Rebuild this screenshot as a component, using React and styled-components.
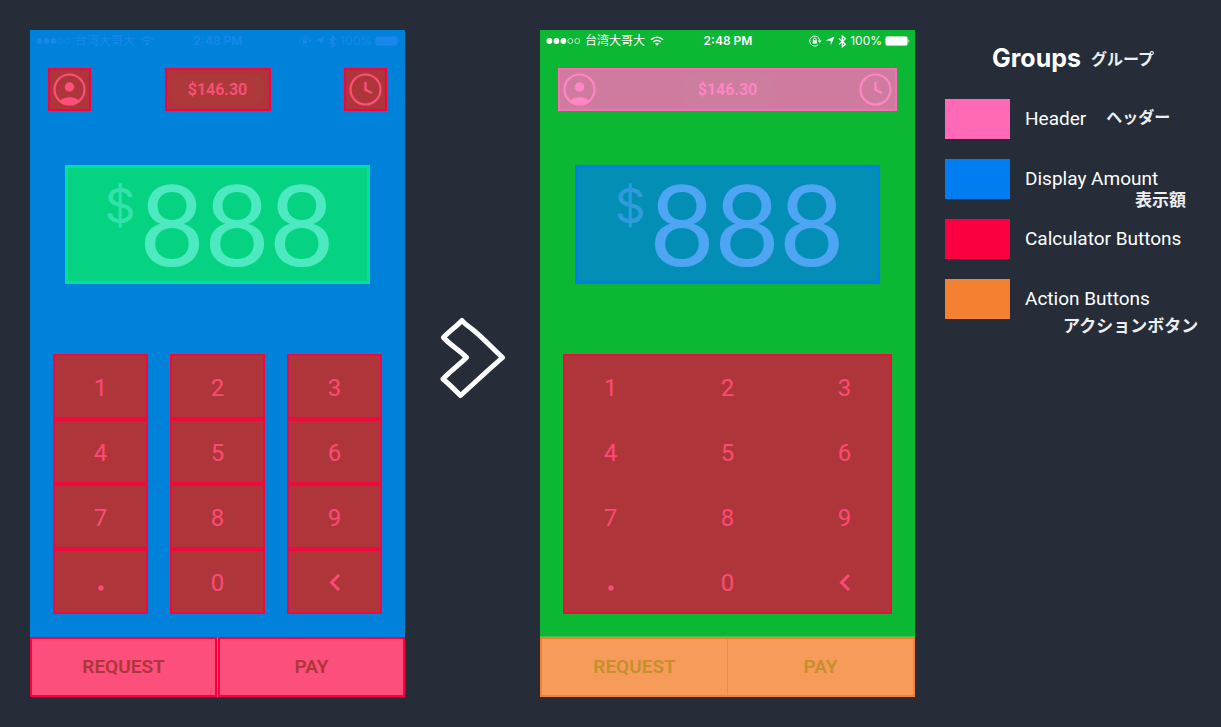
import React from "react";
import styled, { createGlobalStyle, css } from "styled-components";

const GlobalStyle = createGlobalStyle`
  *, *::before, *::after { box-sizing: border-box; }
  body {
    margin: 0;
    background: #262d39;
    color: #fff;
    font-family: Roboto, "Liberation Sans", sans-serif;
  }
  button { font: inherit; color: inherit; background: none; border: 0; padding: 0; margin: 0; cursor: pointer; }
`;

const blueTheme = {
  split: true,
  screen: "#0082db",
  status: "#1987ec",
  headerFill: "#ae363a",
  headerLine: "#fa0041",
  headerInk: "#fc4f7b",
  pill: "#ae393a",
  amountFill: "#05d381",
  amountLine: "#02e0a1",
  amountInk: "#4deac1",
  currencyInk: "#34e1ab",
  actionFill: "#fc4f7b",
  actionLine: "#fa0041",
  actionInk: "#ae363a",
  divider: "#3fb0c0",
};

const greenTheme = {
  split: false,
  screen: "#0bb733",
  status: "#ffffff",
  headerFill: "#cf7b9f",
  headerLine: "#ff69b5",
  headerInk: "#ff85c5",
  pill: "#cd7e9e",
  amountFill: "#038eb6",
  amountLine: "#007df0",
  amountInk: "#4da5f3",
  currencyInk: "#2f9bdc",
  actionFill: "#f79b5b",
  actionLine: "#f48132",
  actionInk: "#c3902c",
  divider: "#e09349",
};

const Page = styled.main`
  display: grid;
  grid-template-columns: minmax(0, 375fr) 135px minmax(0, 375fr) minmax(0, 291fr);
  align-items: start;
  padding: 30px 15px 30px 30px;
`;

const Screen = styled.section`
  display: flex;
  flex-direction: column;
  background: ${(p) => p.$t.screen};
`;

const StatusBar = styled.div`
  display: grid;
  grid-template-columns: 1fr auto 1fr;
  align-items: center;
  height: 20px;
  padding: 2px 5px 0 6px;
  color: ${(p) => p.$t.status};
  font-family: Inter, "Noto Sans CJK TC", sans-serif;
  font-size: 12px;
  line-height: 18px;
`;

const StatusGroup = styled.div`
  display: flex;
  align-items: center;
  justify-content: ${(p) => (p.$end ? "flex-end" : "flex-start")};
  gap: ${(p) => (p.$end ? "3px" : "5px")};
  white-space: nowrap;
`;

const Clock = styled.span`
  font-weight: 600;
`;

const Header = styled.header`
  display: flex;
  justify-content: space-between;
  height: 43px;
  margin: 18px 18px 0;
  color: ${(p) => p.$t.headerInk};
  ${(p) =>
    !p.$t.split &&
    css`
      background: ${p.$t.headerFill};
      box-shadow: inset 0 0 0 2px ${p.$t.headerLine};
    `}
`;

const HeaderButton = styled.button`
  display: flex;
  align-items: center;
  justify-content: center;
  width: ${(p) => (p.$wide ? "106px" : "43px")};
  ${(p) =>
    p.$t.split &&
    css`
      background: ${p.$t.headerFill};
      box-shadow: inset 0 0 0 2px ${p.$t.headerLine};
    `}
`;

const Balance = styled.span`
  width: 94px;
  border-radius: 16px;
  background: ${(p) => p.$t.pill};
  font: 600 16px/32px Roboto, sans-serif;
  text-align: center;
`;

const Amount = styled.div`
  display: flex;
  justify-content: center;
  gap: 4px;
  height: 119px;
  margin: 54px 35px 0;
  padding-left: 4px;
  border: 3px solid ${(p) => p.$t.amountLine};
  background: ${(p) => p.$t.amountFill};
  color: ${(p) => p.$t.amountInk};
`;

const Currency = styled.span`
  padding-top: 8px;
  color: ${(p) => p.$t.currencyInk};
  font: 400 48px/60px Inter, sans-serif;
`;

const Figure = styled.span`
  font: 400 112px/110px Lato, sans-serif;
`;

const Keypad = styled.div`
  display: grid;
  grid-template-columns: repeat(3, minmax(0, 1fr));
  grid-auto-rows: 65px;
  column-gap: 22px;
  margin: 70px 23px 0;
  color: #fc4a77;
  font: 400 24px/28px Roboto, sans-serif;
  ${(p) =>
    !p.$t.split &&
    css`
      background: #ae363a;
      box-shadow: inset 0 0 0 2px #e80f3f;
    `}
`;

const Key = styled.button`
  display: flex;
  align-items: center;
  justify-content: center;
  padding-top: 3px;
  ${(p) =>
    p.$t.split &&
    css`
      background: #ae363a;
      border: 2px solid #f0083f;
    `}
`;

const Actions = styled.div`
  display: grid;
  grid-template-columns: 1fr 1fr;
  column-gap: 1px;
  height: 60px;
  margin-top: 23px;
  background: ${(p) => p.$t.divider};
  color: ${(p) => p.$t.actionInk};
  font: 600 19px/24px Roboto, sans-serif;
  ${(p) =>
    !p.$t.split &&
    css`
      border: 2px solid ${p.$t.actionLine};
      box-shadow: 0 -1px #45bd4e;
    `}
`;

const ActionButton = styled.button`
  background: ${(p) => p.$t.actionFill};
  ${(p) => p.$t.split && css`border: 2px solid ${p.$t.actionLine};`}
`;

const ArrowCell = styled.div`
  display: flex;
  align-self: center;
  justify-content: center;
  margin-bottom: 12px;
`;

const Legend = styled.aside`
  padding: 12px 0 0 30px;
`;

const LegendTitle = styled.h1`
  display: flex;
  align-items: center;
  gap: 10px;
  height: 32px;
  margin: 0 0 25px 47px;
  font: 700 25px/32px Inter, sans-serif;
  white-space: nowrap;
`;

const LegendList = styled.ul`
  display: grid;
  grid-auto-rows: 40px;
  row-gap: 20px;
  margin: 0;
  padding: 0;
  list-style: none;
`;

const LegendItem = styled.li`
  display: flex;
  gap: 15px;
`;

const Swatch = styled.span`
  flex: none;
  width: 65px;
  height: 40px;
  background: ${(p) => p.$color};
`;

const LegendText = styled.div`
  display: flex;
  flex-direction: ${(p) => (p.$inline ? "row" : "column")};
  gap: ${(p) => (p.$inline ? "20px" : "0")};
  padding-top: 8px;
  font-size: 19px;
  line-height: 24px;
  white-space: nowrap;
`;

const Note = styled.span`
  margin-left: ${(p) => p.$indent || 0}px;
  padding-top: ${(p) => p.$drop || 0}px;
  color: #eceef0;
  font: 700 ${(p) => p.$size || 17}px/16px "Noto Sans CJK JP", sans-serif;
`;

function SignalDots() {
  return (
    <svg width="34" height="8" viewBox="0 0 34 8" fill="currentColor" aria-hidden="true">
      <circle cx="3.4" cy="4" r="2.9" />
      <circle cx="10.4" cy="4" r="2.9" />
      <circle cx="17.4" cy="4" r="2.9" />
      <g fill="none" stroke="currentColor" strokeWidth="0.7">
        <circle cx="24.3" cy="4" r="2.5" />
        <circle cx="31.3" cy="4" r="2.5" />
      </g>
    </svg>
  );
}

function Wifi() {
  return (
    <svg width="14" height="10" viewBox="0 0 14 10" fill="none" stroke="currentColor" strokeWidth="1.6" aria-hidden="true">
      <path d="M1 3.8C4.4.4 9.6.4 13 3.8" />
      <path d="M3.2 6C5.4 3.9 8.6 3.9 10.8 6" />
      <path d="M4.9 7.5C6.1 6.5 7.9 6.5 9.1 7.5L7 9.7z" fill="currentColor" stroke="none" />
    </svg>
  );
}

function RotationLock() {
  return (
    <svg width="13" height="12" viewBox="0 0 13 12" fill="none" stroke="currentColor" aria-hidden="true">
      <path d="M9.2 9.7A5 5 0 1 1 10.7 5.5" strokeWidth="0.9" />
      <path d="M8.7 5.4h4L10.7 8z" fill="currentColor" stroke="none" />
      <rect x="3.7" y="5.3" width="4.2" height="3.3" fill="currentColor" stroke="none" />
      <path d="M4.5 5.5V4.4a1.3 1.3 0 0 1 2.6 0v1.1" strokeWidth="0.9" />
    </svg>
  );
}

function LocationArrow() {
  return (
    <svg width="10" height="10" viewBox="0 0 10 10" fill="currentColor" aria-hidden="true">
      <path d="M9.6.6 5.7 9.5V4.7L.6 4.6z" />
    </svg>
  );
}

function Bluetooth() {
  return (
    <svg width="9" height="13" viewBox="0 0 9 13" fill="none" stroke="currentColor" strokeWidth="1.3" aria-hidden="true">
      <path d="M1 3.6 7.5 9.3 4.4 11.8V1.2L7.5 3.7 1 9.4" />
    </svg>
  );
}

function Battery() {
  return (
    <svg width="25" height="10" viewBox="0 0 25 10" fill="currentColor" aria-hidden="true">
      <rect x="0.5" y="0.5" width="22" height="9" rx="1.8" fill="none" stroke="currentColor" strokeOpacity="0.6" />
      <rect x="1" y="1" width="21" height="8" rx="0.8" />
      <path d="M23.5 3.3c1.1.5 1.1 2.9 0 3.4z" />
    </svg>
  );
}

function Person() {
  return (
    <svg width="33" height="33" viewBox="0 0 33 33" fill="currentColor" aria-hidden="true">
      <circle cx="16.5" cy="16.5" r="15" fill="none" stroke="currentColor" strokeWidth="2.2" />
      <circle cx="16.5" cy="14" r="4.7" />
      <path d="M7.5 27.6C9.5 25.2 12.5 24.3 16.5 24.3S23.5 25.2 25.5 27.6C23 30.3 20 31.6 16.5 31.6S10 30.3 7.5 27.6z" />
    </svg>
  );
}

function ClockFace() {
  return (
    <svg width="33" height="33" viewBox="0 0 33 33" fill="none" stroke="currentColor" aria-hidden="true">
      <circle cx="16.5" cy="16.5" r="15" strokeWidth="2.2" />
      <path d="M16.5 9V16.8L23 20" strokeWidth="2.4" />
    </svg>
  );
}

function Backspace() {
  return (
    <svg width="12" height="18" viewBox="0 0 12 18" fill="none" stroke="currentColor" strokeWidth="3" aria-hidden="true">
      <path d="M10 1 2.5 8.5 10 16" />
    </svg>
  );
}

function Point() {
  return (
    <svg width="6" height="18" viewBox="0 0 6 18" fill="currentColor" aria-hidden="true">
      <circle cx="3" cy="14" r="2.7" />
    </svg>
  );
}

function Chevron() {
  return (
    <svg width="66" height="82" viewBox="0 0 66 82" fill="none" stroke="#fff" strokeWidth="5" strokeLinejoin="round" aria-hidden="true">
      <path d="M22 3.5C24.5 6.5 26.5 8.2 30 10.5C42 19.5 52 31 62.5 40.5L49 52.5L20.5 78.5C16 74 9 67 3 62C8 56 19 48 26.5 40.5C20 33.5 10 28 3.5 20.5C9 14.5 17 9 22 3.5z" />
    </svg>
  );
}

const keys = ["1", "2", "3", "4", "5", "6", "7", "8", "9", ".", "0", "<"];

function keyFace(k) {
  if (k === ".") return <Point />;
  if (k === "<") return <Backspace />;
  return k;
}

const keyNames = { ".": "Decimal point", "<": "Delete" };

function Phone({ t }) {
  return (
    <Screen $t={t}>
      <StatusBar $t={t}>
        <StatusGroup>
          <SignalDots />
          <span>台湾大哥大</span>
          <Wifi />
        </StatusGroup>
        <Clock>2:48 PM</Clock>
        <StatusGroup $end>
          <RotationLock />
          <LocationArrow />
          <Bluetooth />
          <span>100%</span>
          <Battery />
        </StatusGroup>
      </StatusBar>
      <Header $t={t}>
        <HeaderButton $t={t} aria-label="Profile"><Person /></HeaderButton>
        <HeaderButton $t={t} $wide><Balance $t={t}>$146.30</Balance></HeaderButton>
        <HeaderButton $t={t} aria-label="History"><ClockFace /></HeaderButton>
      </Header>
      <Amount $t={t}>
        <Currency $t={t}>$</Currency>
        <Figure>888</Figure>
      </Amount>
      <Keypad $t={t}>
        {keys.map((k) => (
          <Key key={k} $t={t} aria-label={keyNames[k]}>{keyFace(k)}</Key>
        ))}
      </Keypad>
      <Actions $t={t}>
        <ActionButton $t={t}>REQUEST</ActionButton>
        <ActionButton $t={t}>PAY</ActionButton>
      </Actions>
    </Screen>
  );
}

export default function App() {
  return (
    <>
      <GlobalStyle />
      <Page>
        <Phone t={blueTheme} />
        <ArrowCell><Chevron /></ArrowCell>
        <Phone t={greenTheme} />
        <Legend>
          <LegendTitle>
            Groups
            <Note lang="ja" $size={16}>グループ</Note>
          </LegendTitle>
          <LegendList>
            <LegendItem>
              <Swatch $color="#ff69b5" />
              <LegendText $inline>
                Header
                <Note lang="ja" $size={16} $drop={1}>ヘッダー</Note>
              </LegendText>
            </LegendItem>
            <LegendItem>
              <Swatch $color="#007df0" />
              <LegendText>
                Display Amount
                <Note lang="ja" $indent={110}>表示額</Note>
              </LegendText>
            </LegendItem>
            <LegendItem>
              <Swatch $color="#fa0041" />
              <LegendText>Calculator Buttons</LegendText>
            </LegendItem>
            <LegendItem>
              <Swatch $color="#f48132" />
              <LegendText>
                Action Buttons
                <Note lang="ja" $indent={38} $drop={6}>アクションボタン</Note>
              </LegendText>
            </LegendItem>
          </LegendList>
        </Legend>
      </Page>
    </>
  );
}
